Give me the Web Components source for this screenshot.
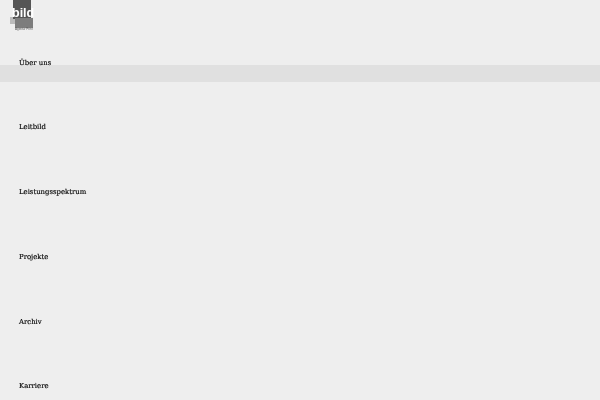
<!DOCTYPE html>
<html>
<head>
<meta charset="utf-8">
<title>bild</title>
<style>
  html, body { margin: 0; height: 100%; overflow: hidden; background: #eee; }
</style>
</head>
<body>
<site-nav>
  <nav-item active>Über uns</nav-item>
  <nav-item>Leitbild</nav-item>
  <nav-item>Leistungsspektrum</nav-item>
  <nav-item>Projekte</nav-item>
  <nav-item>Archiv</nav-item>
  <nav-item>Karriere</nav-item>
</site-nav>
<script>
class SiteLogo extends HTMLElement {
  constructor() {
    super();
    this.attachShadow({ mode: 'open' }).innerHTML = `
      <style>
        :host { display: block; width: 26px; height: 32px; position: relative; }
        .back { position: absolute; left: 0; top: 17px; width: 6px; height: 7px; background: #bbb; }
        .top { position: absolute; left: 3px; top: 0; width: 18px; height: 19px; background: #555; }
        .bottom { position: absolute; left: 5px; top: 18px; width: 18px; height: 10px; background: #7d7d7d; }
        .name { position: absolute; left: 2px; top: 7px; font: bold 12.5px/13px "Liberation Sans", sans-serif; color: #fff; will-change: transform; }
        .sub { position: absolute; left: 5px; top: 28px; font: 3px/3px "Liberation Sans", sans-serif; color: #555; white-space: nowrap; will-change: transform; }
      </style>
      <div class="back"></div>
      <div class="top"></div>
      <div class="bottom"></div>
      <div class="name">bild</div>
      <div class="sub">Agentur Print</div>`;
  }
}

class NavItem extends HTMLElement {
  constructor() {
    super();
    this.attachShadow({ mode: 'open' }).innerHTML = `
      <style>
        :host { display: block; height: 64.7px; position: relative; padding-left: 19px; font: 6.9px/12px "DejaVu Serif", serif; color: #000; }
        :host([active])::before { content: ""; position: absolute; left: 0; right: 0; top: 9px; height: 17px; background: #e0e0e0; }
        span { display: inline-block; position: relative; top: 0.8px; will-change: transform; -webkit-text-stroke: 0.15px #000; }
      </style>
      <span><slot></slot></span>`;
  }
}

class SiteNav extends HTMLElement {
  constructor() {
    super();
    this.attachShadow({ mode: 'open' }).innerHTML = `
      <style>
        :host { display: block; height: 400px; overflow: hidden; }
        header { height: 56px; padding-left: 10px; }
      </style>
      <header><site-logo></site-logo></header>
      <slot></slot>`;
  }
}

customElements.define('site-logo', SiteLogo);
customElements.define('nav-item', NavItem);
customElements.define('site-nav', SiteNav);
</script>
</body>
</html>
